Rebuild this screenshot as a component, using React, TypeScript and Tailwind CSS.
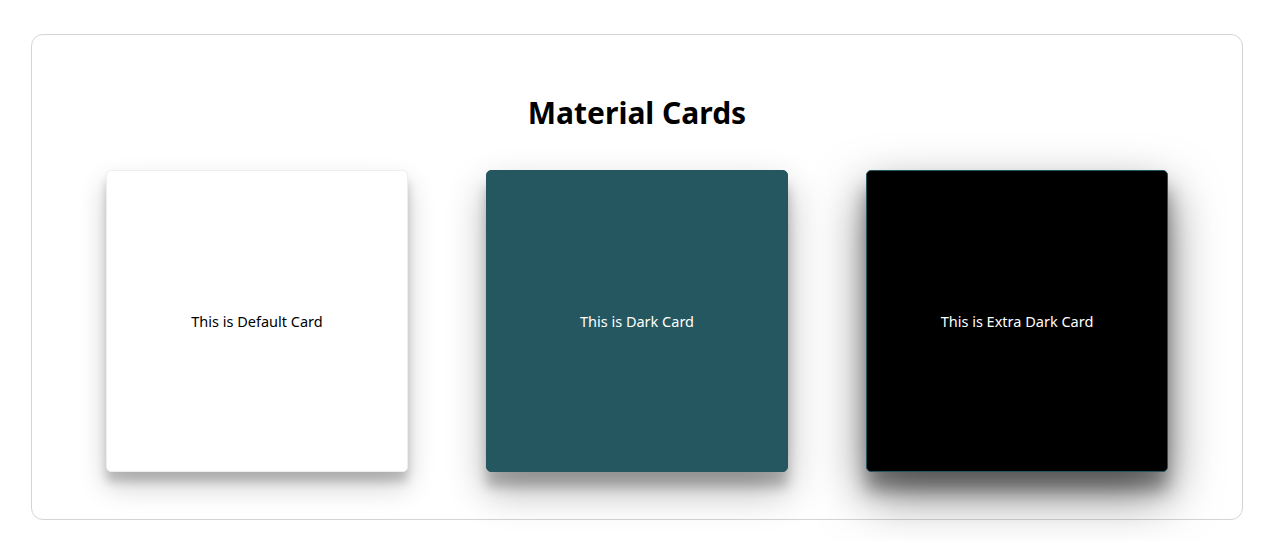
const cards = [
    {
        label: 'This is Default Card',
        className: 'bg-white text-black border-[#eeeeee] shadow-[0_14px_28px_rgba(0,0,0,0.2),0_10px_10px_rgba(0,0,0,0.18)]',
    },
    {
        label: 'This is Dark Card',
        className: 'bg-[#255761] text-white border-[#255761] shadow-[0_19px_38px_rgba(0,0,0,0.3),0_15px_12px_rgba(0,0,0,0.22)]',
    },
    {
        label: 'This is Extra Dark Card',
        className: 'bg-black text-white border-[#255761] shadow-[0_22px_50px_rgba(0,0,0,0.55),0_18px_18px_rgba(0,0,0,0.35)]',
    },
];

export default function App() {
    return (
        <div className="min-h-screen bg-white pt-[34px] pl-[31px] pr-[30px] font-['Segoe_UI','Noto_Sans','Open_Sans',sans-serif]">
            <div className="border border-[#d4d4d4] rounded-xl pt-[58px] pb-[47px]">
                <h1 className="text-center text-[30px] leading-[40px] font-bold text-black mb-[37px]">Material Cards</h1>
                <div className="flex justify-center gap-[78px]">
                    {cards.map((card) => (
                        <div
                            key={card.label}
                            className={`w-[302px] h-[302px] border rounded-[5px] flex items-center justify-center text-[14.5px] pt-px ${card.className}`}
                        >
                            {card.label}
                        </div>
                    ))}
                </div>
            </div>
        </div>
    );
}
